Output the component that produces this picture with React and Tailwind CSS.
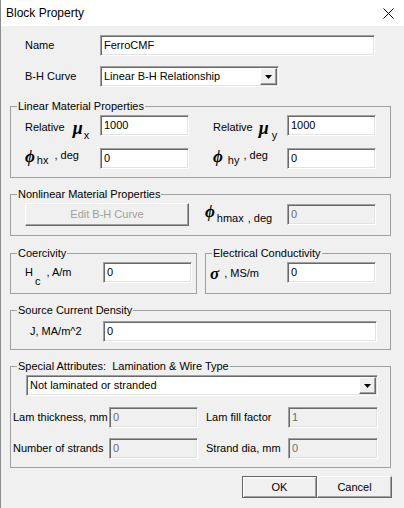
import React from 'react';

const sunken =
  'border border-t-[#a0a0a0] border-l-[#a0a0a0] border-b-white border-r-white shadow-[inset_1px_1px_0_#696969,inset_-1px_-1px_0_#e3e3e3]';
const raised =
  'border border-t-white border-l-white border-b-[#696969] border-r-[#696969] shadow-[inset_-1px_-1px_0_#a0a0a0] bg-[#f0f0f0]';
const greek = "font-['Liberation_Serif','DejaVu_Serif',serif] font-bold italic text-[17px] leading-none";

function Field({ w, value, disabled }) {
  return (
    <div
      className={`${w} h-[21px] ${sunken} ${
        disabled ? 'bg-[#f0f0f0] text-[#6d6d6d]' : 'bg-white text-black'
      } flex items-center pl-[3px] shrink-0`}
    >
      {value}
    </div>
  );
}

function Select({ w, value }) {
  return (
    <div className={`${w} h-[21px] ${sunken} bg-white flex items-center shrink-0`}>
      <span className="flex-1 pl-[3px]">{value}</span>
      <div className={`w-[17px] h-[17px] mr-[1px] ${raised} flex items-center justify-center`}>
        <svg width="7" height="4" viewBox="0 0 7 4">
          <path d="M0 0h7L3.5 4z" fill="#000" />
        </svg>
      </div>
    </div>
  );
}

function Group({ title, className, children }) {
  return (
    <fieldset className={`border border-[#a0a0a0] ${className}`}>
      <legend className="ml-[6px] px-[1px] leading-[13px] whitespace-pre">{title}</legend>
      {children}
    </fieldset>
  );
}

export default function App() {
  return (
    <div className="w-[404px] h-[508px] bg-[#f0f0f0] border-l border-[#8c8c8c] font-['Liberation_Sans',Arial,sans-serif] text-[11px] text-black overflow-hidden">
      {/* title bar */}
      <div className="h-[26px] bg-white flex items-center justify-between pl-[5px] pr-[10px]">
        <span className="text-[12px]">Block Property</span>
        <svg width="11" height="11" viewBox="0 0 11 11">
          <path d="M0.5 0.5l10 10M10.5 0.5l-10 10" stroke="#000" strokeWidth="1" />
        </svg>
      </div>

      <div className="flex items-center pl-[24px] mt-[9px]">
        <span className="w-[75px]">Name</span>
        <Field w="w-[275px]" value="FerroCMF" />
      </div>
      <div className="flex items-center pl-[24px] mt-[10px]">
        <span className="w-[75px]">B-H Curve</span>
        <Select w="w-[179px]" value="Linear B-H Relationship" />
      </div>

      {/* linear */}
      <Group title="Linear Material Properties" className="ml-[9px] w-[381px] mt-[13px]">
        <div className="flex flex-col gap-[12px] pl-[14px] pt-[2px] pb-[8px]">
          <div className="flex items-center">
            <div className="w-[75px] flex items-center">
              <span className="relative top-[2px]">Relative</span>
              <span className={`${greek} text-[18px] ml-[8px] relative top-[2px]`}>μ</span>
              <span className="relative top-[10px] ml-[1px]">x</span>
            </div>
            <Field w="w-[89px]" value="1000" />
            <div className="w-[74px] ml-[24px] flex items-center">
              <span className="relative top-[2px]">Relative</span>
              <span className={`${greek} text-[18px] ml-[6px] relative top-[2px]`}>μ</span>
              <span className="relative top-[10px] ml-[3px]">y</span>
            </div>
            <Field w="w-[89px]" value="1000" />
          </div>
          <div className="flex items-center">
            <div className="w-[75px] flex items-center">
              <span className={`${greek} relative -top-[2px]`}>ϕ</span>
              <span className="ml-[2px] relative top-[2px]">hx</span>
              <span className="ml-[6px] relative -top-[3px]">, deg</span>
            </div>
            <Field w="w-[89px]" value="0" />
            <div className="w-[74px] ml-[24px] flex items-center">
              <span className={`${greek} relative -top-[2px]`}>ϕ</span>
              <span className="ml-[5px] relative top-[2px]">hy</span>
              <span className="ml-[4px] relative -top-[3px]">, deg</span>
            </div>
            <Field w="w-[89px]" value="0" />
          </div>
        </div>
      </Group>

      {/* nonlinear */}
      <Group title="Nonlinear Material Properties" className="ml-[9px] w-[381px] mt-[10px]">
        <div className="flex items-center pl-[14px] pt-[2px] pb-[9px]">
          <div className={`w-[164px] h-[23px] ${raised} flex items-center justify-center text-[#a0a0a0]`}>
            Edit B-H Curve
          </div>
          <div className="w-[82px] ml-[16px] flex items-center">
            <span className={`${greek} relative -top-[3px]`}>ϕ</span>
            <span className="ml-[2px] relative top-[4px]">hmax</span>
            <span className="ml-[4px] relative top-[4px]">, deg</span>
          </div>
          <Field w="w-[89px]" value="0" disabled />
        </div>
      </Group>

      {/* coercivity / conductivity */}
      <div className="flex ml-[9px] gap-[8px] mt-[11px]">
        <Group title="Coercivity" className="w-[187px]">
          <div className="flex items-center pl-[14px] pt-[2px] pb-[10px]">
            <div className="w-[78px] flex items-center">
              <span>H</span>
              <span className="ml-[2px] relative top-[9px]">c</span>
              <span className="ml-[6px]">, A/m</span>
            </div>
            <Field w="w-[89px]" value="0" />
          </div>
        </Group>
        <Group title="Electrical Conductivity" className="w-[186px]">
          <div className="flex items-center pl-[4px] pt-[2px] pb-[10px]">
            <div className="w-[77px] flex items-center">
              <span className={`${greek} relative top-[1px]`}>σ</span>
              <span className="ml-[5px] relative top-[1px]">, MS/m</span>
            </div>
            <Field w="w-[89px]" value="0" />
          </div>
        </Group>
      </div>

      {/* source */}
      <Group title="Source Current Density" className="ml-[9px] w-[381px] mt-[10px]">
        <div className="flex items-center pl-[19px] pt-[4px] pb-[7px]">
          <span className="w-[73px]">J, MA/m^2</span>
          <Field w="w-[274px]" value="0" />
        </div>
      </Group>

      {/* special */}
      <Group title="Special Attributes:  Lamination & Wire Type" className="ml-[9px] w-[381px] mt-[10px]">
        <div className="pt-[2px] pb-[8px]">
          <div className="pl-[15px]">
            <Select w="w-[352px]" value="Not laminated or stranded" />
          </div>
          <div className="flex flex-col gap-[10px] mt-[11px] pl-[2px]">
            <div className="flex items-center">
              <span className="w-[96px]">Lam thickness, mm</span>
              <Field w="w-[89px]" value="0" disabled />
              <span className="w-[82px] ml-[8px]">Lam fill factor</span>
              <Field w="w-[90px]" value="1" disabled />
            </div>
            <div className="flex items-center">
              <span className="w-[96px]">Number of strands</span>
              <Field w="w-[89px]" value="0" disabled />
              <span className="w-[82px] ml-[8px]">Strand dia, mm</span>
              <Field w="w-[90px]" value="0" disabled />
            </div>
          </div>
        </div>
      </Group>

      <div className="flex justify-end pr-[12px] mt-[8px]">
        <div className="w-[75px] h-[22px] border border-[#646464] shadow-[inset_1px_1px_0_white,inset_-1px_-1px_0_#a0a0a0] bg-[#f0f0f0] flex items-center justify-center">
          OK
        </div>
        <div className={`w-[75px] h-[22px] ${raised} flex items-center justify-center`}>Cancel</div>
      </div>
    </div>
  );
}
